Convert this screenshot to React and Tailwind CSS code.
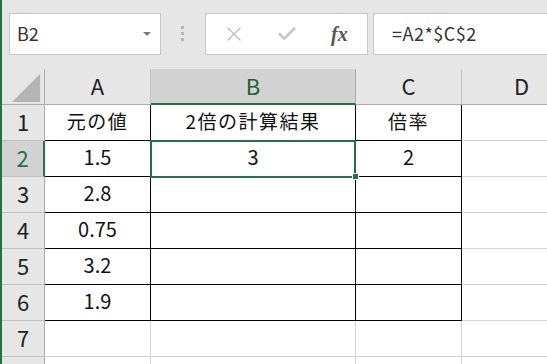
import { X, Check } from 'lucide-react';

const FONT = { fontFamily: '"Noto Sans CJK JP", "Noto Sans", sans-serif' };

const cols = [
  { key: 'A', w: 'w-[106px]' },
  { key: 'B', w: 'w-[205px]' },
  { key: 'C', w: 'w-[106px]' },
  { key: 'D', w: 'w-[120px]' },
];

const rows = [
  ['元の値', '2倍の計算結果', '倍率', ''],
  ['1.5', '3', '2', ''],
  ['2.8', '', '', ''],
  ['0.75', '', '', ''],
  ['3.2', '', '', ''],
  ['1.9', '', '', ''],
  ['', '', '', ''],
  ['', '', '', ''],
];

const Cell = ({ r, c, value }) => {
  const inTable = r < 6 && c < 3;
  const right = inTable ? 'border-r-black' : 'border-r-[#d4d4d4]';
  const bottom = inTable ? 'border-b-black' : 'border-b-[#d4d4d4]';
  const isJa = r === 0;
  return (
    <div
      className={`relative ${cols[c].w} shrink-0 h-[36px] border-r border-b ${right} ${bottom} bg-white flex items-center justify-center text-[#111] ${
        isJa ? 'text-[19px] tracking-[1.5px]' : 'text-[20px]'
      }`}
    >
      <span className="-mt-[3px]">{value}</span>
      {r === 1 && c === 1 && (
        <div className="absolute left-[-1px] top-[-1px] w-[206px] h-[38px] border-2 border-[#217346] z-10">
          <div className="absolute left-[200px] top-[31px] w-[7px] h-[7px] bg-[#217346] border border-white" />
        </div>
      )}
    </div>
  );
};

export default function App() {
  return (
    <div className="w-[547px] h-[364px] overflow-hidden bg-[#e6e6e6] flex" style={FONT}>
      <div className="w-[2px] shrink-0 bg-[#217346]" />
      <div className="flex-1 flex flex-col min-w-0">
        {/* toolbar */}
        <div className="h-[69px] shrink-0 flex items-start pt-[13px] pl-[7px]">
          <div className="w-[152px] h-[42px] bg-white border border-[#c6c6c6] flex items-center justify-between pl-[7px] pr-[9px]">
            <span className="text-[18px] text-[#333] -mt-[2px]">B2</span>
            <span className="w-0 h-0 border-l-[4px] border-r-[4px] border-t-[4px] border-l-transparent border-r-transparent border-t-[#7a7a7a]" />
          </div>
          <div className="ml-[20px] mt-[13px] flex flex-col gap-[3px]">
            <span className="w-[3px] h-[3px] bg-[#b4b4b4]" />
            <span className="w-[3px] h-[3px] bg-[#b4b4b4]" />
            <span className="w-[3px] h-[3px] bg-[#b4b4b4]" />
          </div>
          <div className="ml-[21px] w-[163px] h-[42px] bg-white border border-[#c6c6c6] flex items-center pl-[16px]">
            <X size={24} strokeWidth={1.3} className="text-[#bdbdbd]" />
            <Check size={22} strokeWidth={2.8} className="text-[#c4c4c4] ml-[30px]" />
            <span className="ml-[33px] text-[20px] italic font-bold text-[#555]" style={{ fontFamily: '"Liberation Serif", serif' }}>
              fx
            </span>
          </div>
          <div className="ml-[5px] flex-1 h-[42px] bg-white border border-[#c6c6c6] border-r-0 flex items-center pl-[18px]">
            <span className="text-[18px] tracking-[0.5px] text-[#333] -mt-[2px]">=A2*$C$2</span>
          </div>
        </div>

        {/* column headers */}
        <div className="flex h-[36px] shrink-0">
          <div className="w-[43px] shrink-0 border-r border-b border-[#ababab] relative">
            <svg width="30" height="30" className="absolute left-[10px] top-[4px]">
              <polygon points="28,1 28,29 0,29" fill="#b4b4b4" />
            </svg>
          </div>
          {cols.map((col) => {
            const sel = col.key === 'B';
            return (
              <div
                key={col.key}
                className={`${col.w} shrink-0 border-r flex items-center justify-center text-[22px] ${
                  sel
                    ? 'bg-[#d2d2d2] border-b-2 border-b-[#217346] border-r-[#ababab] text-[#1d5e38]'
                    : 'border-b border-b-[#ababab] border-r-[#c4c4c4] text-[#222]'
                }`}
              >
                <span className="-mt-[2px]">{col.key}</span>
              </div>
            );
          })}
        </div>

        {/* rows */}
        {rows.map((row, r) => {
          const sel = r === 1;
          return (
            <div key={r} className="flex shrink-0">
              <div
                className={`w-[43px] h-[36px] shrink-0 border-b border-b-[#bfbfbf] flex items-center justify-center text-[22px] ${
                  sel
                    ? 'bg-[#d2d2d2] border-r-2 border-r-[#217346] text-[#217346]'
                    : 'bg-[#e6e6e6] border-r border-r-[#ababab] text-[#222]'
                }`}
              >
                {r < 7 && <span className="-mt-[2px]">{r + 1}</span>}
              </div>
              {row.map((v, c) => (
                <Cell key={c} r={r} c={c} value={v} />
              ))}
            </div>
          );
        })}
      </div>
    </div>
  );
}
